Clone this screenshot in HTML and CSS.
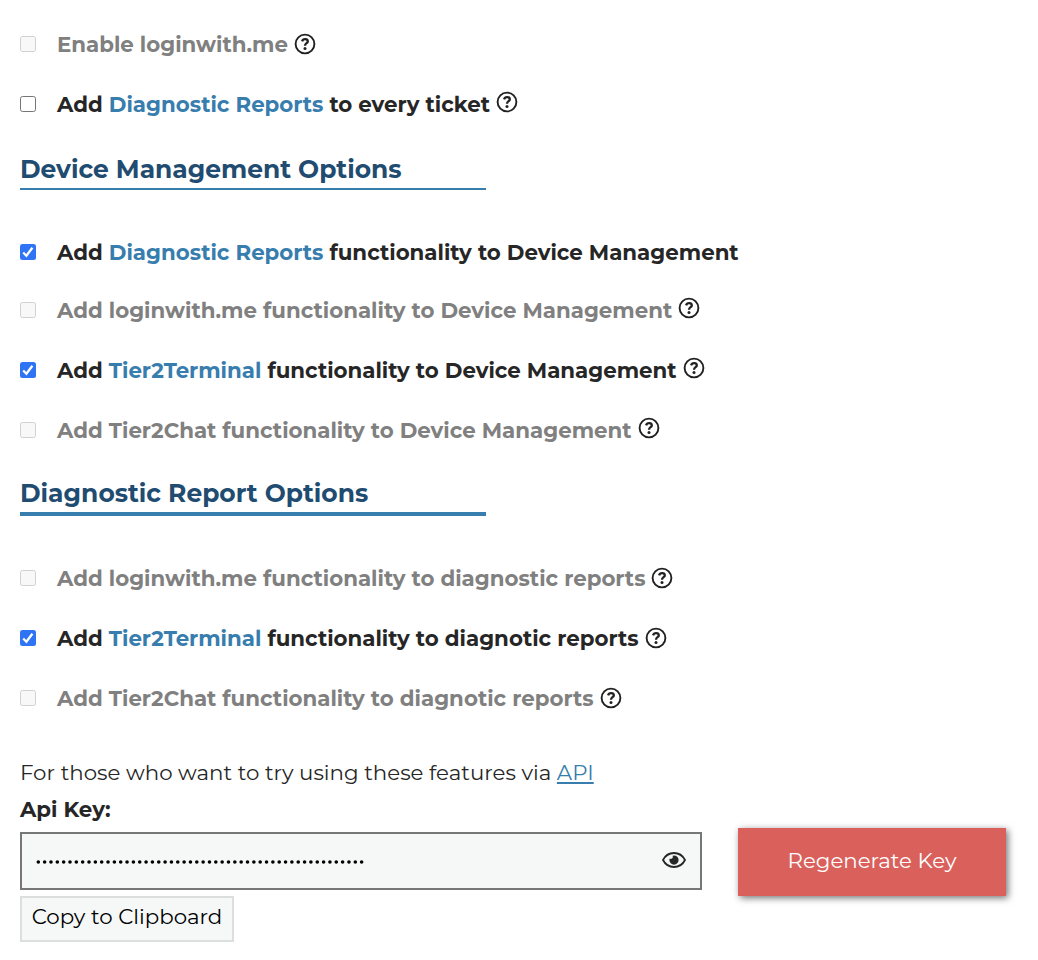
FILE: index.html
```
<!DOCTYPE html>
<html lang="en">
<head>
<meta charset="utf-8">
<title>Integration Options</title>
<link rel="stylesheet" href="styles.css">
</head>
<body>
<svg class="sprite" aria-hidden="true">
  <symbol id="help" viewBox="-.5 -.5 22 22">
    <circle cx="10.5" cy="10.5" r="9.4" fill="none" stroke="currentColor" stroke-width="1.9"/>
    <path d="M7.6 7.9C8 6.4 9.1 5.6 10.6 5.6C12.2 5.6 13.3 6.5 13.3 7.9C13.3 9.7 10.5 9.8 10.5 12.2" fill="none" stroke="currentColor" stroke-width="2.3"/>
    <circle cx="10.5" cy="15" r="1.5" fill="currentColor"/>
  </symbol>
  <symbol id="check" viewBox="0 0 16 16">
    <path d="M3.2 8.5L6.4 11.7L12.4 3.8" fill="none" stroke="#fff" stroke-width="2.3"/>
  </symbol>
</svg>
<main class="options">
  <section class="group">
    <label class="row disabled"><span class="box"></span><span class="text">Enable loginwith.me</span><svg class="help"><use href="#help"/></svg></label>
    <label class="row raised"><span class="box"></span><span class="text">Add <a class="link">Diagnostic Reports</a> to every ticket</span><svg class="help"><use href="#help"/></svg></label>
  </section>
  <h2 class="heading">Device Management Options</h2>
  <section class="group devices">
    <label class="row first"><svg class="box checked"><use href="#check"/></svg><span class="text">Add <a class="link">Diagnostic Reports</a> functionality to Device Management</span></label>
    <label class="row disabled raised"><span class="box"></span><span class="text">Add loginwith.me functionality to Device Management</span><svg class="help"><use href="#help"/></svg></label>
    <label class="row raised"><svg class="box checked"><use href="#check"/></svg><span class="text">Add <a class="link">Tier2Terminal</a> functionality to Device Management</span><svg class="help"><use href="#help"/></svg></label>
    <label class="row disabled raised"><span class="box"></span><span class="text">Add Tier2Chat functionality to Device Management</span><svg class="help"><use href="#help"/></svg></label>
  </section>
  <h2 class="heading thick">Diagnostic Report Options</h2>
  <section class="group reports">
    <label class="row disabled"><span class="box"></span><span class="text">Add loginwith.me functionality to diagnostic reports</span><svg class="help"><use href="#help"/></svg></label>
    <label class="row"><svg class="box checked"><use href="#check"/></svg><span class="text">Add <a class="link">Tier2Terminal</a> functionality to diagnotic reports</span><svg class="help"><use href="#help"/></svg></label>
    <label class="row disabled"><span class="box"></span><span class="text">Add Tier2Chat functionality to diagnotic reports</span><svg class="help"><use href="#help"/></svg></label>
  </section>
  <section class="api">
    <p class="intro">For those who want to try using these features via <a class="api-link">API</a></p>
    <p class="key-label">Api Key:</p>
    <div class="key-row">
      <div class="key-column">
        <div class="key-field">
          <svg class="dots" viewBox="0 0 330 4"><path d="M2.3 2H328" stroke="#000" stroke-width="3.6" stroke-linecap="round" stroke-dasharray="0 6.34"/></svg>
          <svg class="eye" viewBox="0 0 24 16">
            <path d="M1 8C3.3 3.5 7.2 1 12 1S20.7 3.5 23 8C20.7 12.5 16.8 15 12 15S3.3 12.5 1 8Z" fill="none" stroke="#262626" stroke-width="1.8"/>
            <path d="M12 3.5A4.6 4.6 0 1 1 7.4 8.1C7.4 7.5 7.5 7 7.7 6.6C9.7 7.7 11.6 5.7 10.6 3.8Z" fill="#262626"/>
          </svg>
        </div>
        <button class="copy">Copy to Clipboard</button>
      </div>
      <button class="regenerate">Regenerate Key</button>
    </div>
  </section>
</main>
</body>
</html>
```
FILE: styles.css
```
* { box-sizing: border-box; }
body { margin: 0; background: #fff; color: #262626; font: 400 21.34px/26px Montserrat, Inter, sans-serif; }
.sprite { position: absolute; width: 0; height: 0; }
.options { padding: 14px 20px 0; }
.group { display: flex; flex-direction: column; }
.row { display: flex; align-items: center; height: 60px; font-weight: 700; white-space: nowrap; }
.row.first { height: 56px; }
.box { width: 16px; height: 16px; margin-right: 21px; border: 1px solid #767676; border-radius: 2.5px; background: #fff; flex: none; }
.disabled { color: #808080; }
.disabled .box { border-color: #d1d1d1; background: #f8f8f8; }
.box.checked { border: 0; background: #3074f6; }
.help { width: 22px; height: 22px; margin-left: 6px; color: #212121; flex: none; }
.raised .help { margin-bottom: 4px; }
.link, .api-link { color: #377dae; }
.heading { width: 466px; height: 56px; margin: 0; padding-top: 20px; border-bottom: 2px solid #377dae; color: #1f4c70; font-size: 24.95px; line-height: 30px; font-weight: 700; white-space: nowrap; }
.heading.thick { padding-top: 18px; border-bottom-width: 4px; }
.devices { padding-top: 34px; }
.reports { padding-top: 32px; }
.api { padding-top: 31px; }
.intro, .key-label { margin: 0; }
.api-link { text-decoration: underline; text-decoration-thickness: 2px; text-underline-offset: 2px; }
.key-label { padding-top: 11px; font-weight: 700; }
.key-row { display: flex; align-items: flex-start; gap: 36px; padding-top: 6px; }
.key-column { display: flex; flex-direction: column; align-items: flex-start; gap: 6px; padding-top: 4px; }
.key-field { display: flex; align-items: center; justify-content: space-between; width: 682px; height: 58px; padding: 0 14px; border: 2px solid #777; background: #f6f8f8; }
.dots { width: 330px; height: 4px; margin-top: 2px; }
.eye { width: 24px; height: 16px; margin-top: -2px; }
button { font: inherit; border-radius: 0; cursor: pointer; white-space: nowrap; }
.copy { width: 214px; height: 46px; padding: 0 0 7px; border: 2px solid #dbdfde; background: #f6f8f8; color: #000; }
.regenerate { width: 268px; height: 68px; padding: 0 0 5px; border: 0; background: #da605c; color: #fff; box-shadow: 2px 2px 7px rgba(0, 0, 0, .55); }
```
